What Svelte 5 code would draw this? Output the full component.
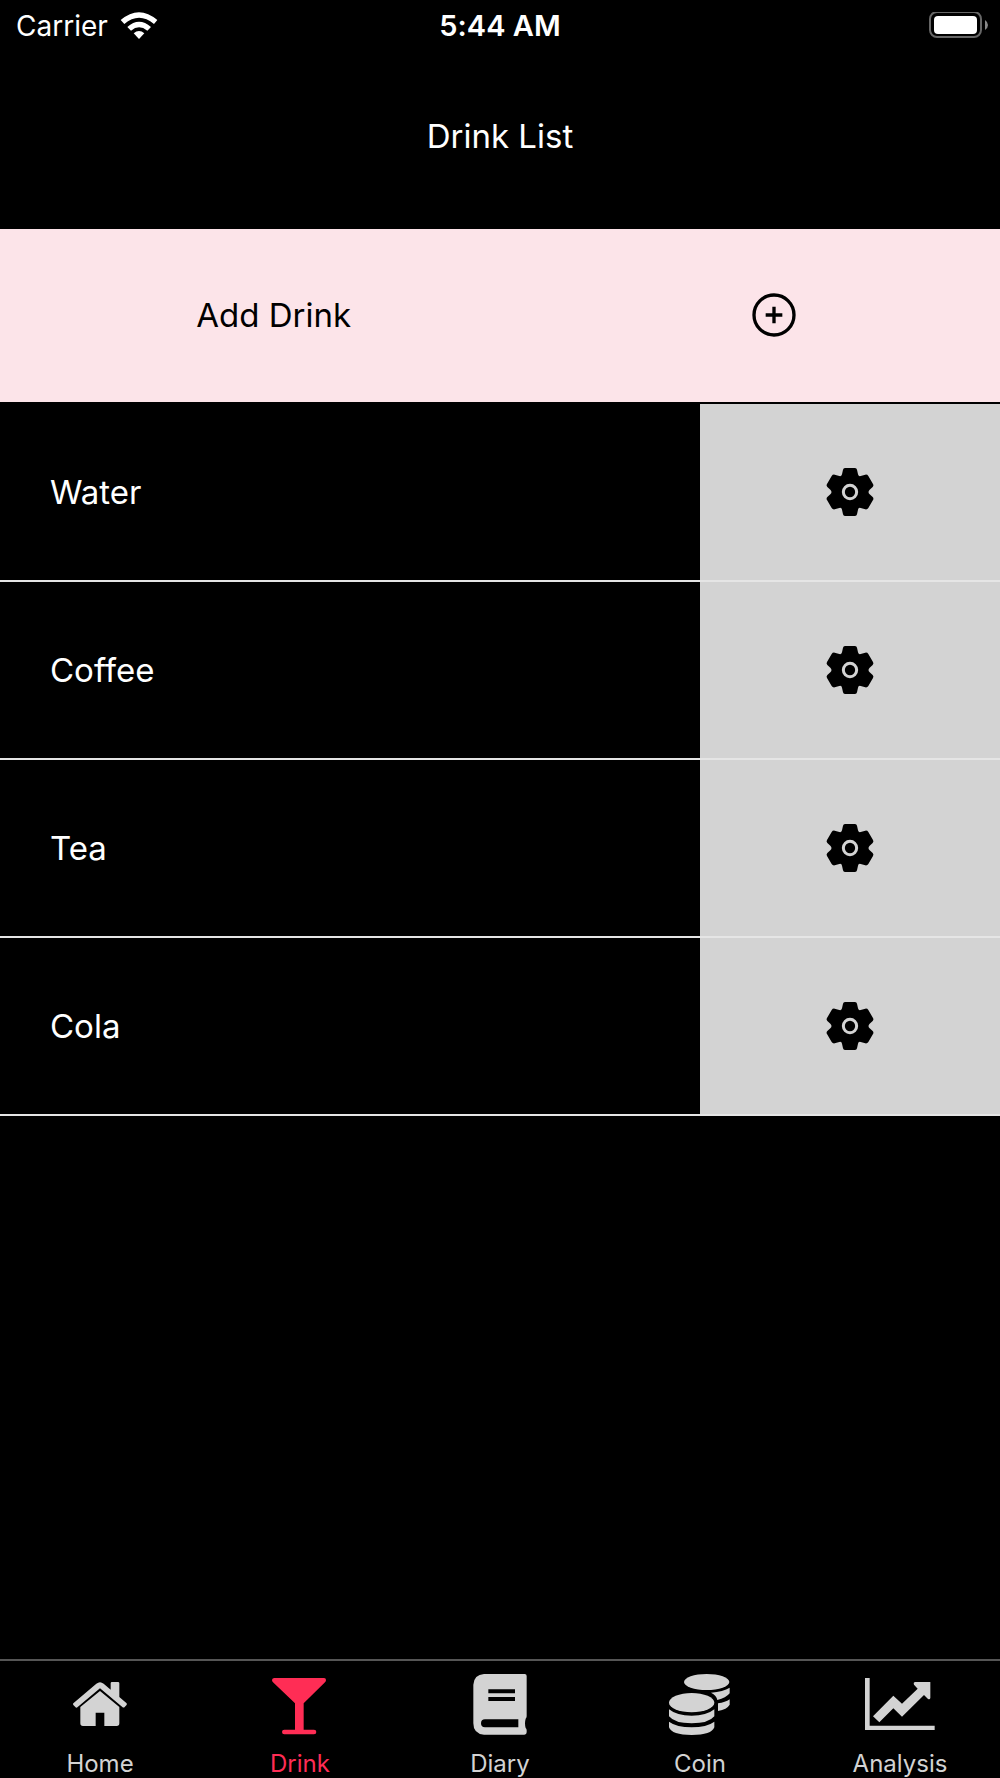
<script>
    // ドリンクの一覧
    const drinks = ['Water', 'Coffee', 'Tea', 'Cola'];

    // 下部タブ
    const tabs = [
        { id: 'home', label: 'Home' },
        { id: 'drink', label: 'Drink' },
        { id: 'diary', label: 'Diary' },
        { id: 'coin', label: 'Coin' },
        { id: 'analysis', label: 'Analysis' },
    ];

    let activeTab = 'drink';
</script>

<style>
    :global(body) {
        margin: 0;
        background-color: #000;
    }
    .app {
        display: flex;
        flex-direction: column;
        min-height: 100vh;
        background-color: #000;
        color: #fff;
        font-family: Inter, "Liberation Sans", sans-serif;
        font-size: 33px;
        font-variant-ligatures: none;
    }
    svg {
        display: block;
        flex: none;
    }
    button {
        margin: 0;
        padding: 0;
        border: none;
        border-radius: 0;
        color: #000;
        font: inherit;
        cursor: pointer;
    }

    /* ステータスバー */
    .status-bar {
        display: grid;
        grid-template-columns: 1fr auto 1fr;
        align-items: center;
        height: 44px;
        padding: 7px 12px 0;
        box-sizing: border-box;
        font-size: 28px;
    }
    .carrier {
        display: flex;
        align-items: center;
        gap: 12px;
        padding-left: 4px;
    }
    .time {
        font-size: 29px;
        font-weight: 600;
    }
    .battery {
        justify-self: end;
    }

    .header {
        display: flex;
        align-items: center;
        justify-content: center;
        height: 185px;
        padding-bottom: 2px;
        box-sizing: border-box;
    }
    .title {
        margin: 0;
        font-size: 33px;
        font-weight: 400;
    }

    .add-button {
        display: flex;
        align-items: center;
        justify-content: space-around;
        height: 173px;
        padding-bottom: 2px;
        margin-bottom: 2px;
        background-color: #fce4e9;
    }
    .add-icon {
        padding: 0 8px;
    }

    .drink-list {
        flex: 1;
        margin: 0;
        padding: 0;
        list-style: none;
    }
    .drink-item {
        display: flex;
        height: 176px;
        border-bottom: 2px solid #e5e5e5;
    }
    .drink-name {
        display: flex;
        flex: 7;
        align-items: center;
        padding-left: 50px;
    }
    .setting-button {
        display: flex;
        flex: 0 0 30%;
        align-items: center;
        justify-content: center;
        background-color: #d3d3d3;
    }

    /* タブバー */
    .tab-bar {
        display: flex;
        height: 117px;
        border-top: 2px solid #555;
    }
    .tab {
        display: flex;
        flex: 1;
        flex-direction: column;
        align-items: center;
        gap: 13px;
        padding-top: 11px;
        color: #d3d3d3;
        font-size: 24px;
        line-height: 29px;
        text-decoration: none;
    }
    .tab.active {
        color: #ff2d55;
    }
</style>

<div class="app">
    <div class="status-bar">
        <div class="carrier">
            <span>Carrier</span>
            <svg width="38" height="28" viewBox="358 30 114 84" fill="#fff" aria-hidden="true">
                <path d="M360 54 Q415 7 470 54 L460 66 Q415 28 371 66 Z" />
                <path d="M380 75 Q415 43 451 75 L440 86 Q415 66 391 86 Z" />
                <path d="M399 94 Q415 80 431 94 L415 111 Z" />
            </svg>
        </div>
        <span class="time">5:44 AM</span>
        <svg class="battery" width="59" height="28" viewBox="0 1 59 28" aria-hidden="true">
            <rect x="1" y="1" width="51" height="25" rx="7" fill="none" stroke="#666" stroke-width="2" />
            <rect x="5" y="5" width="43" height="18" rx="4" fill="#fff" />
            <path d="M56 9 Q59 11 59 14 Q59 17 56 19 Z" fill="#888" />
        </svg>
    </div>

    <header class="header">
        <h1 class="title">Drink List</h1>
    </header>

    <button class="add-button">
        <span>Add Drink</span>
        <svg class="add-icon" width="44" height="44" viewBox="0 0 132 132" fill="none" stroke="#000" stroke-width="10" aria-hidden="true">
            <circle cx="66" cy="66" r="60" />
            <path d="M41 66 H91 M66 41 V91" />
        </svg>
    </button>

    <ul class="drink-list">
        {#each drinks as drink}
            <li class="drink-item">
                <span class="drink-name">{drink}</span>
                <button class="setting-button" aria-label="{drink} settings">
                    <svg width="48" height="48" viewBox="-72 -72 144 144" aria-hidden="true">
                        <path d="M-15 -72 H15 Q20 -72 21 -67 L24 -53 Q25 -46 32 -48 L46 -52 Q52 -53 55 -48 L69 -24 Q72 -19 68 -15 L59 -7 Q52 0 59 7 L68 15 Q72 19 69 24 L55 48 Q52 53 46 52 L32 48 Q25 46 24 53 L21 67 Q20 72 15 72 H-15 Q-20 72 -21 67 L-24 53 Q-25 46 -32 48 L-46 52 Q-52 53 -55 48 L-69 24 Q-72 19 -68 15 L-59 7 Q-52 0 -59 -7 L-68 -15 Q-72 -19 -69 -24 L-55 -48 Q-52 -53 -46 -52 L-32 -48 Q-25 -46 -24 -53 L-21 -67 Q-20 -72 -15 -72 Z" />
                        <circle r="20" fill="none" stroke="#d3d3d3" stroke-width="9" />
                    </svg>
                </button>
            </li>
        {/each}
    </ul>

    <nav class="tab-bar">
        {#each tabs as tab}
            <a class="tab" class:active={activeTab === tab.id} href="#{tab.id}" on:click={() => (activeTab = tab.id)}>
                <svg width="72" height="64" viewBox="192 96 216 192" fill="currentColor" aria-hidden="true">
                    {#if tab.id === 'home'}
                        <path d="M220 190 L289 131 Q300 122 311 131 L332 149 V130 Q332 126 336 126 H354 Q358 126 358 130 V171 L379 189 Q383 192 379 196 L374 201 Q371 204 367 201 L300 145 L233 201 Q229 205 226 201 L220 195 Q218 192 220 190 Z" />
                        <path d="M300 153 L358 201 V250 Q358 258 350 258 H313 V218 H287 V258 H249 Q241 258 241 250 V201 Z" />
                    {:else if tab.id === 'drink'}
                        <path d="M223 114 H372 Q378 114 378 120 Q378 124 375 127 L311 190 V269 H342 A7 7 0 0 1 342 283 H253 A7 7 0 0 1 253 269 H285 V190 L219 127 Q216 124 216 120 Q217 114 223 114 Z" />
                    {:else if tab.id === 'diary'}
                        <path fill-rule="evenodd" d="M252 102 H374 Q380 102 380 108 V229 Q380 233 377 236 Q373 250 377 264 Q380 267 380 271 V277 Q380 284 373 284 H252 Q220 282 220 250 V134 Q222 104 252 102 Z M265 148 V160 H345 V148 Z M265 171 V183 H345 V171 Z M255 238 A12 12 0 0 0 255 262 H355 V238 Z" />
                    {:else if tab.id === 'coin'}
                        <ellipse cx="320" cy="126" rx="68" ry="24" />
                        <ellipse cx="275" cy="188" rx="68" ry="29" />
                        <path d="M207 208 Q230 227 275 227 Q320 227 343 208 V229 Q326 250 275 250 Q224 250 207 229 Z" />
                        <path d="M207 245 Q230 262 275 262 Q320 262 343 245 V262 Q335 285 275 285 Q215 285 207 262 Z" />
                        <path d="M389 143 V160 Q378 174 352 180 Q350 166 333 158 Q370 155 389 143 Z" />
                        <path d="M389 178 V194 Q381 208 354 213 V190 Q376 187 389 178 Z" />
                    {:else}
                        <path d="M195 114 H209 V257 H404 V270 H195 Z" />
                        <path d="M219 229 L280 167 L306 191 L353 146 L342 134 Q339 126 346 126 H391 V174 Q390 180 384 177 L372 165 L306 230 L280 205 L238 247 Z" />
                    {/if}
                </svg>
                <span>{tab.label}</span>
            </a>
        {/each}
    </nav>
</div>
